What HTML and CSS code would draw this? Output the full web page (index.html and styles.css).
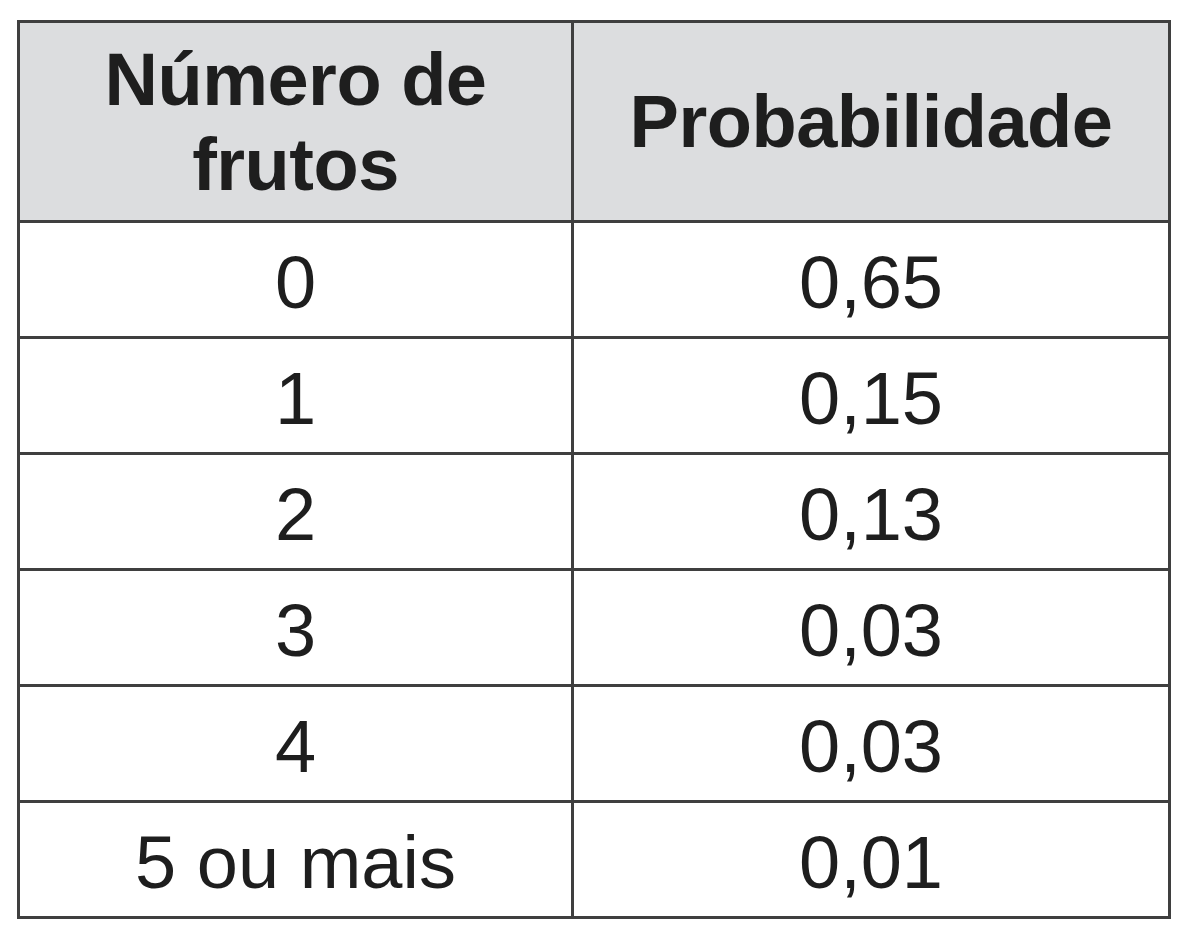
FILE: index.html
```html
<!DOCTYPE html>
<html lang="pt">
<head>
<meta charset="utf-8">
<title>Tabela</title>
<link rel="stylesheet" href="styles.css">
</head>
<body>
<div class="page">
  <table class="prob">
    <colgroup><col class="c1"><col class="c2"></colgroup>
    <thead>
      <tr class="head"><th>Número de<br>frutos</th><th>Probabilidade</th></tr>
    </thead>
    <tbody>
      <tr><td>0</td><td>0,65</td></tr>
      <tr><td>1</td><td>0,15</td></tr>
      <tr><td>2</td><td>0,13</td></tr>
      <tr><td>3</td><td>0,03</td></tr>
      <tr><td>4</td><td>0,03</td></tr>
      <tr><td>5 ou mais</td><td>0,01</td></tr>
    </tbody>
  </table>
</div>
</body>
</html>
```

FILE: styles.css
```css
html, body {
  margin: 0;
  padding: 0;
  background: #ffffff;
}
.page {
  padding: 20px 0 0 17px;
}
.prob {
  border-collapse: collapse;
  width: 1151px;
  font-family: "Liberation Sans", Arial, sans-serif;
  color: #1e1e1e;
  font-size: 74px;
  table-layout: fixed;
}
.c1 { width: 554px; }
.c2 { width: 597px; }
.prob th, .prob td {
  border: 3px solid #3f3f3f;
  text-align: center;
  vertical-align: middle;
  padding: 0;
  line-height: 85px;
}
.prob th {
  background: #dcdddf;
  font-weight: bold;
  letter-spacing: -0.5px;
}
.head { height: 200px; }
.prob tbody tr { height: 116px; }
.prob td { padding-top: 6px; }
```
